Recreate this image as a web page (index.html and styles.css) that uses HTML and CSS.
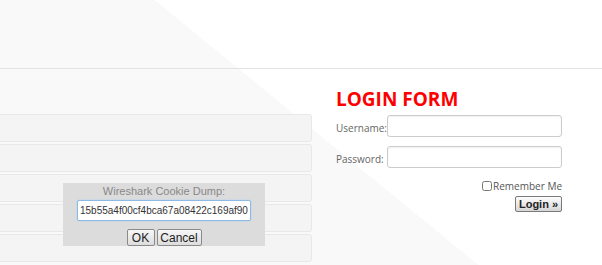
FILE: index.html
```html
<!DOCTYPE html>
<html>
  <head>
    <meta charset="UTF-8">
    <title>Login</title>
    <link rel="stylesheet" href="styles.css">
  </head>
  <body>
    <div class="page">
      <div class="header"></div>

      <div class="main">
        <ul class="rows">
          <li></li>
          <li></li>
          <li></li>
          <li></li>
          <li></li>
        </ul>

        <div class="login">
          <h1>LOGIN FORM</h1>
          <form action="">
            <div class="field">
              <label for="username">Username:</label>
              <input type="text" id="username" name="username" />
            </div>
            <div class="field">
              <label for="password">Password:</label>
              <input type="password" id="password" name="password" />
            </div>
            <div class="remember">
              <input type="checkbox" id="remember" name="remember" />
              <label for="remember">Remember Me</label>
            </div>
            <div class="actions">
              <button type="submit" class="button-login">Login &raquo;</button>
            </div>
          </form>
        </div>
      </div>

      <div class="prompt">
        <p class="prompt-title">Wireshark Cookie Dump:</p>
        <input type="text" class="prompt-input" value="15b55a4f00cf4bca67a08422c169af90" />
        <div class="prompt-buttons">
          <button class="prompt-button ok">OK</button>
          <button class="prompt-button cancel">Cancel</button>
        </div>
      </div>
    </div>
  </body>
</html>
```

FILE: styles.css
```css
*
{
  box-sizing: border-box;
}

body
{
  margin: 0;
  font-family: "Open Sans", sans-serif;
}

.page
{
  position: relative;
  width: 602px;
  height: 265px;
  overflow: hidden;
  background: linear-gradient(39.3deg, #f9f9f9 303px, #ffffff 303px);
}

.header
{
  height: 69px;
  border-bottom: 1px solid #e3e3e3;
}

.main
{
  display: flex;
}

.rows
{
  list-style: none;
  margin: 45px 0 0 -5px;
  padding: 0;
  width: 317px;
}

.rows li
{
  height: 28px;
  margin-bottom: 2px;
  background: #f4f4f4;
  border: 1px solid #e8e8e8;
  border-radius: 3px;
}

.login
{
  margin-left: 24px;
  width: 226px;
}

h1
{
  margin: 18px 0 4px 0;
  font-size: 19px;
  line-height: 24px;
  font-weight: 700;
  color: #ff0000;
}

.field
{
  display: flex;
  align-items: flex-end;
  margin-bottom: 9px;
}

.field label
{
  width: 51px;
  font-size: 10px;
  line-height: 14px;
  padding-bottom: 2px;
  color: #666666;
}

.field input
{
  width: 175px;
  height: 22px;
  border: 1px solid #cccccc;
  border-radius: 3px;
  box-shadow: inset 0 1px 2px rgba(0, 0, 0, 0.06);
  background: #ffffff;
}

.remember
{
  display: flex;
  justify-content: flex-end;
  align-items: center;
  margin-top: 11px;
  font-size: 10px;
  color: #555555;
}

.remember input
{
  width: 10px;
  height: 10px;
  margin: 0 1px 0 0;
}

.actions
{
  display: flex;
  justify-content: flex-end;
  margin-top: 3px;
}

.button-login
{
  width: 47px;
  height: 16px;
  padding: 0;
  font-family: "Liberation Sans", sans-serif;
  font-size: 11px;
  font-weight: 700;
  color: #222222;
  border: 1px solid #7a7a7a;
  border-radius: 2px;
  background: linear-gradient(#fdfdfd, #d6d6d6);
}

/* the browser prompt that sits over the page */
.prompt
{
  position: absolute;
  left: 63px;
  top: 183px;
  width: 202px;
  height: 63px;
  background: #dcdcdc;
  text-align: center;
  font-family: "Liberation Sans", sans-serif;
}

.prompt-title
{
  margin: 0;
  padding-top: 2px;
  font-size: 11px;
  line-height: 13px;
  color: #888888;
}

.prompt-input
{
  display: block;
  width: 174px;
  height: 21px;
  margin: 2px 0 0 14px;
  padding: 0 2px;
  font-family: "Liberation Sans", sans-serif;
  font-size: 10px;
  color: #333333;
  border: 1px solid #8db9e2;
  border-radius: 2px;
  box-shadow: 0 0 2px #a9d0f5;
  background: #ffffff;
}

.prompt-buttons
{
  display: flex;
  justify-content: center;
  gap: 2px;
  margin-top: 8px;
}

.prompt-button
{
  height: 17px;
  padding: 0;
  font-family: "Liberation Sans", sans-serif;
  font-size: 12px;
  color: #222222;
  border: 1px solid #8a8a8a;
  border-radius: 2px;
  background: linear-gradient(#f6f6f6, #dddddd);
}

.ok
{
  width: 28px;
}

.cancel
{
  width: 45px;
}
```
